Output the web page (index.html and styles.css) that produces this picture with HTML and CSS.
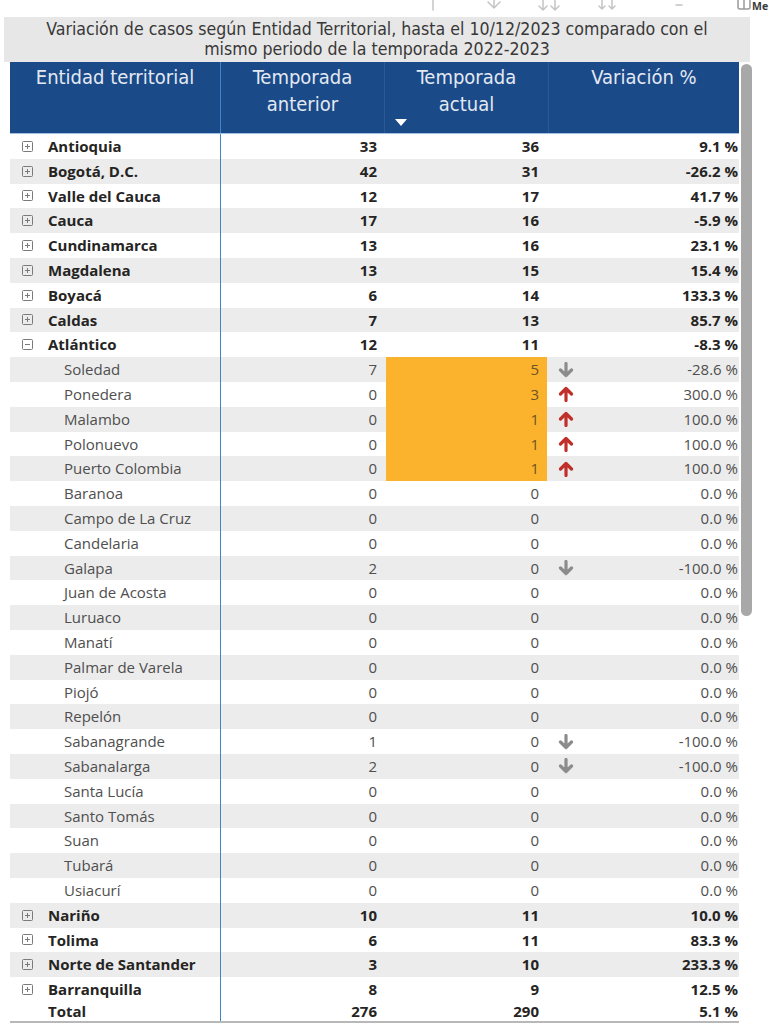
FILE: index.html
```html
<!DOCTYPE html>
<html lang="es">
<head>
<meta charset="utf-8">
<title>Variación de casos</title>
<link rel="stylesheet" href="styles.css">
</head>
<body>
<div class="toolbar">
  <svg class="tb tb1" width="10" height="12" viewBox="0 0 10 12"><path d="M5 0 V11" /></svg>
  <svg class="tb tb2" width="18" height="12" viewBox="0 0 18 12"><path d="M9 0 V10 M3 4 L9 10 L15 4" /></svg>
  <svg class="tb tb3" width="26" height="12" viewBox="0 0 26 12"><path d="M7 0 V11 M3 7 L7 11 L11 7 M19 0 V11 M15 7 L19 11 L23 7" /></svg>
  <svg class="tb tb4" width="22" height="12" viewBox="0 0 22 12"><path d="M6 0 V10 M3 7 L6 10 L9 7 M16 0 V10 M13 7 L16 10 L19 7" /></svg>
  <svg class="tb tb5" width="10" height="12" viewBox="0 0 10 12"><path d="M2 5 H8" /></svg>
  <svg class="tb tb6" width="14" height="12" viewBox="0 0 14 12"><path d="M1 0 V8 Q1 10 3 10 H11 Q13 10 13 8 V0 M7 0 V10" /></svg>
  <span class="me">Me</span>
</div>

<div class="title">Variación de casos según Entidad Territorial, hasta el 10/12/2023 comparado con el<br>mismo periodo de la temporada 2022-2023</div>

<div class="visual">
  <div class="table">
    <div class="head">
      <div class="h h1">Entidad territorial</div>
      <div class="h h2">Temporada<br>anterior</div>
      <div class="h h3">Temporada<br>actual<span class="sort"></span></div>
      <div class="h h4">Variación %</div>
    </div>

    <div class="row b">
      <div class="c name"><svg class="exp" viewBox="0 0 11 11"><rect x="0.5" y="0.5" width="10" height="10" rx="1"/><path d="M3 5.5 H8 M5.5 3 V8"/></svg>Antioquia</div>
      <div class="c n2">33</div><div class="c n3">36</div><div class="c v"><span class="val">9.1 %</span></div>
    </div>
    <div class="row b alt">
      <div class="c name"><svg class="exp" viewBox="0 0 11 11"><rect x="0.5" y="0.5" width="10" height="10" rx="1"/><path d="M3 5.5 H8 M5.5 3 V8"/></svg>Bogotá, D.C.</div>
      <div class="c n2">42</div><div class="c n3">31</div><div class="c v"><span class="val">-26.2 %</span></div>
    </div>
    <div class="row b">
      <div class="c name"><svg class="exp" viewBox="0 0 11 11"><rect x="0.5" y="0.5" width="10" height="10" rx="1"/><path d="M3 5.5 H8 M5.5 3 V8"/></svg>Valle del Cauca</div>
      <div class="c n2">12</div><div class="c n3">17</div><div class="c v"><span class="val">41.7 %</span></div>
    </div>
    <div class="row b alt">
      <div class="c name"><svg class="exp" viewBox="0 0 11 11"><rect x="0.5" y="0.5" width="10" height="10" rx="1"/><path d="M3 5.5 H8 M5.5 3 V8"/></svg>Cauca</div>
      <div class="c n2">17</div><div class="c n3">16</div><div class="c v"><span class="val">-5.9 %</span></div>
    </div>
    <div class="row b">
      <div class="c name"><svg class="exp" viewBox="0 0 11 11"><rect x="0.5" y="0.5" width="10" height="10" rx="1"/><path d="M3 5.5 H8 M5.5 3 V8"/></svg>Cundinamarca</div>
      <div class="c n2">13</div><div class="c n3">16</div><div class="c v"><span class="val">23.1 %</span></div>
    </div>
    <div class="row b alt">
      <div class="c name"><svg class="exp" viewBox="0 0 11 11"><rect x="0.5" y="0.5" width="10" height="10" rx="1"/><path d="M3 5.5 H8 M5.5 3 V8"/></svg>Magdalena</div>
      <div class="c n2">13</div><div class="c n3">15</div><div class="c v"><span class="val">15.4 %</span></div>
    </div>
    <div class="row b">
      <div class="c name"><svg class="exp" viewBox="0 0 11 11"><rect x="0.5" y="0.5" width="10" height="10" rx="1"/><path d="M3 5.5 H8 M5.5 3 V8"/></svg>Boyacá</div>
      <div class="c n2">6</div><div class="c n3">14</div><div class="c v"><span class="val">133.3 %</span></div>
    </div>
    <div class="row b alt">
      <div class="c name"><svg class="exp" viewBox="0 0 11 11"><rect x="0.5" y="0.5" width="10" height="10" rx="1"/><path d="M3 5.5 H8 M5.5 3 V8"/></svg>Caldas</div>
      <div class="c n2">7</div><div class="c n3">13</div><div class="c v"><span class="val">85.7 %</span></div>
    </div>
    <div class="row b">
      <div class="c name"><svg class="exp" viewBox="0 0 11 11"><rect x="0.5" y="0.5" width="10" height="10" rx="1"/><path d="M3 5.5 H8"/></svg>Atlántico</div>
      <div class="c n2">12</div><div class="c n3">11</div><div class="c v"><span class="val">-8.3 %</span></div>
    </div>

    <div class="row s alt">
      <div class="c name">Soledad</div>
      <div class="c n2">7</div><div class="c n3 hl">5</div>
      <div class="c v"><svg class="arr down" viewBox="0 0 16 16"><path d="M8 1.5 V13.5 M2.5 8 L8 13.5 L13.5 8"/></svg><span class="val">-28.6 %</span></div>
    </div>
    <div class="row s">
      <div class="c name">Ponedera</div>
      <div class="c n2">0</div><div class="c n3 hl">3</div>
      <div class="c v"><svg class="arr up" viewBox="0 0 16 16"><path d="M8 14.5 V2.5 M2.5 8 L8 2.5 L13.5 8"/></svg><span class="val">300.0 %</span></div>
    </div>
    <div class="row s alt">
      <div class="c name">Malambo</div>
      <div class="c n2">0</div><div class="c n3 hl">1</div>
      <div class="c v"><svg class="arr up" viewBox="0 0 16 16"><path d="M8 14.5 V2.5 M2.5 8 L8 2.5 L13.5 8"/></svg><span class="val">100.0 %</span></div>
    </div>
    <div class="row s">
      <div class="c name">Polonuevo</div>
      <div class="c n2">0</div><div class="c n3 hl">1</div>
      <div class="c v"><svg class="arr up" viewBox="0 0 16 16"><path d="M8 14.5 V2.5 M2.5 8 L8 2.5 L13.5 8"/></svg><span class="val">100.0 %</span></div>
    </div>
    <div class="row s alt">
      <div class="c name">Puerto Colombia</div>
      <div class="c n2">0</div><div class="c n3 hl">1</div>
      <div class="c v"><svg class="arr up" viewBox="0 0 16 16"><path d="M8 14.5 V2.5 M2.5 8 L8 2.5 L13.5 8"/></svg><span class="val">100.0 %</span></div>
    </div>
    <div class="row s">
      <div class="c name">Baranoa</div>
      <div class="c n2">0</div><div class="c n3">0</div><div class="c v"><span class="val">0.0 %</span></div>
    </div>
    <div class="row s alt">
      <div class="c name">Campo de La Cruz</div>
      <div class="c n2">0</div><div class="c n3">0</div><div class="c v"><span class="val">0.0 %</span></div>
    </div>
    <div class="row s">
      <div class="c name">Candelaria</div>
      <div class="c n2">0</div><div class="c n3">0</div><div class="c v"><span class="val">0.0 %</span></div>
    </div>
    <div class="row s alt">
      <div class="c name">Galapa</div>
      <div class="c n2">2</div><div class="c n3">0</div>
      <div class="c v"><svg class="arr down" viewBox="0 0 16 16"><path d="M8 1.5 V13.5 M2.5 8 L8 13.5 L13.5 8"/></svg><span class="val">-100.0 %</span></div>
    </div>
    <div class="row s">
      <div class="c name">Juan de Acosta</div>
      <div class="c n2">0</div><div class="c n3">0</div><div class="c v"><span class="val">0.0 %</span></div>
    </div>
    <div class="row s alt">
      <div class="c name">Luruaco</div>
      <div class="c n2">0</div><div class="c n3">0</div><div class="c v"><span class="val">0.0 %</span></div>
    </div>
    <div class="row s">
      <div class="c name">Manatí</div>
      <div class="c n2">0</div><div class="c n3">0</div><div class="c v"><span class="val">0.0 %</span></div>
    </div>
    <div class="row s alt">
      <div class="c name">Palmar de Varela</div>
      <div class="c n2">0</div><div class="c n3">0</div><div class="c v"><span class="val">0.0 %</span></div>
    </div>
    <div class="row s">
      <div class="c name">Piojó</div>
      <div class="c n2">0</div><div class="c n3">0</div><div class="c v"><span class="val">0.0 %</span></div>
    </div>
    <div class="row s alt">
      <div class="c name">Repelón</div>
      <div class="c n2">0</div><div class="c n3">0</div><div class="c v"><span class="val">0.0 %</span></div>
    </div>
    <div class="row s">
      <div class="c name">Sabanagrande</div>
      <div class="c n2">1</div><div class="c n3">0</div>
      <div class="c v"><svg class="arr down" viewBox="0 0 16 16"><path d="M8 1.5 V13.5 M2.5 8 L8 13.5 L13.5 8"/></svg><span class="val">-100.0 %</span></div>
    </div>
    <div class="row s alt">
      <div class="c name">Sabanalarga</div>
      <div class="c n2">2</div><div class="c n3">0</div>
      <div class="c v"><svg class="arr down" viewBox="0 0 16 16"><path d="M8 1.5 V13.5 M2.5 8 L8 13.5 L13.5 8"/></svg><span class="val">-100.0 %</span></div>
    </div>
    <div class="row s">
      <div class="c name">Santa Lucía</div>
      <div class="c n2">0</div><div class="c n3">0</div><div class="c v"><span class="val">0.0 %</span></div>
    </div>
    <div class="row s alt">
      <div class="c name">Santo Tomás</div>
      <div class="c n2">0</div><div class="c n3">0</div><div class="c v"><span class="val">0.0 %</span></div>
    </div>
    <div class="row s">
      <div class="c name">Suan</div>
      <div class="c n2">0</div><div class="c n3">0</div><div class="c v"><span class="val">0.0 %</span></div>
    </div>
    <div class="row s alt">
      <div class="c name">Tubará</div>
      <div class="c n2">0</div><div class="c n3">0</div><div class="c v"><span class="val">0.0 %</span></div>
    </div>
    <div class="row s">
      <div class="c name">Usiacurí</div>
      <div class="c n2">0</div><div class="c n3">0</div><div class="c v"><span class="val">0.0 %</span></div>
    </div>

    <div class="row b alt">
      <div class="c name"><svg class="exp" viewBox="0 0 11 11"><rect x="0.5" y="0.5" width="10" height="10" rx="1"/><path d="M3 5.5 H8 M5.5 3 V8"/></svg>Nariño</div>
      <div class="c n2">10</div><div class="c n3">11</div><div class="c v"><span class="val">10.0 %</span></div>
    </div>
    <div class="row b">
      <div class="c name"><svg class="exp" viewBox="0 0 11 11"><rect x="0.5" y="0.5" width="10" height="10" rx="1"/><path d="M3 5.5 H8 M5.5 3 V8"/></svg>Tolima</div>
      <div class="c n2">6</div><div class="c n3">11</div><div class="c v"><span class="val">83.3 %</span></div>
    </div>
    <div class="row b alt">
      <div class="c name"><svg class="exp" viewBox="0 0 11 11"><rect x="0.5" y="0.5" width="10" height="10" rx="1"/><path d="M3 5.5 H8 M5.5 3 V8"/></svg>Norte de Santander</div>
      <div class="c n2">3</div><div class="c n3">10</div><div class="c v"><span class="val">233.3 %</span></div>
    </div>
    <div class="row b">
      <div class="c name"><svg class="exp" viewBox="0 0 11 11"><rect x="0.5" y="0.5" width="10" height="10" rx="1"/><path d="M3 5.5 H8 M5.5 3 V8"/></svg>Barranquilla</div>
      <div class="c n2">8</div><div class="c n3">9</div><div class="c v"><span class="val">12.5 %</span></div>
    </div>
    <div class="row b total">
      <div class="c name">Total</div>
      <div class="c n2">276</div><div class="c n3">290</div><div class="c v"><span class="val">5.1 %</span></div>
    </div>
  </div>
  <div class="scrollbar"></div>
</div>
</body>
</html>
```

FILE: styles.css
```css
* { box-sizing: border-box; }

html, body {
  margin: 0;
  padding: 0;
  background: #ffffff;
}

body {
  width: 769px;
  height: 1024px;
  overflow: hidden;
  font-family: "Open Sans", "DejaVu Sans", sans-serif;
}

/* top toolbar (clipped icons) */
.toolbar {
  height: 17px;
  display: flex;
  align-items: flex-start;
  position: relative;
}
.tb {
  display: block;
  fill: none;
  stroke: #c4c4c4;
  stroke-width: 1.5;
  stroke-linecap: round;
  stroke-linejoin: round;
}
.tb1 { margin-left: 428px; margin-top: -1px; }
.tb2 { margin-left: 47px; margin-top: -2px; }
.tb3 { margin-left: 33px; margin-top: -1px; }
.tb4 { margin-left: 34px; margin-top: -1px; }
.tb5 { margin-left: 56px; margin-top: 0; }
.tb6 { margin-left: 53px; margin-top: -1px; stroke: #9a9a9a; }
.me {
  margin-left: 1px;
  margin-top: 0;
  font-family: "Open Sans", sans-serif;
  font-weight: 700;
  font-size: 10.5px;
  color: #3a3a3a;
  line-height: 13px;
}

/* title */
.title {
  margin-left: 4px;
  width: 746px;
  height: 45px;
  padding: 2px 4px 3px;
  background: #e7e7e7;
  color: #383838;
  font-family: "DejaVu Sans Condensed", "DejaVu Sans", sans-serif;
  font-stretch: condensed;
  font-size: 17.6px;
  line-height: 20px;
  text-align: center;
  white-space: nowrap;
}

/* visual */
.visual {
  position: relative;
}

.table {
  margin-left: 10px;
  width: 729px;
}

.head {
  display: grid;
  grid-template-columns: 211px 164px 164px 190px;
  height: 72px;
  background: #1b4a89;
  border-bottom: 1px solid #9fc0e0;
}
.h {
  position: relative;
  color: #e3e9f2;
  font-family: "DejaVu Sans Condensed", "DejaVu Sans", sans-serif;
  font-stretch: condensed;
  font-size: 20px;
  line-height: 27px;
  padding-top: 2px;
  text-align: center;
}
.h1 { border-right: 1px solid #3f86c8; }
.h2 { border-right: 1px solid #2c5996; }
.h3 { border-right: 1px solid #2c5996; }
.sort {
  position: absolute;
  left: 10px;
  bottom: 7px;
  width: 0;
  height: 0;
  border-left: 6px solid transparent;
  border-right: 6px solid transparent;
  border-top: 7px solid #ffffff;
}

.row {
  display: grid;
  grid-template-columns: 211px 164px 164px 190px;
  height: 24.8px;
  font-size: 15px;
  line-height: 24.8px;
  color: #4f4f4f;
}
.row.alt { background: #ececec; }
.row.b {
  font-weight: 700;
  color: #252423;
}

.c {
  white-space: nowrap;
  height: 100%;
}
.name {
  display: flex;
  align-items: center;
  border-right: 1px solid #3f86c8;
  padding-left: 38px;
}
.row.s .name { padding-left: 54px; }

.exp {
  width: 11px;
  height: 11px;
  margin-left: -26px;
  margin-right: 15px;
  fill: none;
  stroke: #7a7a7a;
  stroke-width: 1;
}

.n2 {
  text-align: right;
  padding-right: 8px;
}
.n3 {
  text-align: right;
  padding-right: 10px;
  margin-left: 1px;
}
.n3.hl {
  background: #fbb22c;
  color: #6f5322;
  margin-right: 2px;
  padding-right: 8px;
}

.v {
  display: flex;
  align-items: center;
  padding-right: 1px;
}
.val { margin-left: auto; }

.arr {
  width: 16px;
  height: 16px;
  margin-left: 9px;
  fill: none;
  stroke-width: 3.2;
  stroke-linecap: round;
  stroke-linejoin: round;
}
.arr.down { stroke: #8c8c8c; }
.arr.up { stroke: #c0302b; }

.row.total {
  line-height: 19px;
  border-bottom: 2px solid #b8b8b8;
  height: 21px;
}

.scrollbar {
  position: absolute;
  left: 741px;
  top: 2px;
  width: 11px;
  height: 552px;
  border-radius: 6px;
  background: #a8a8a8;
}
```
